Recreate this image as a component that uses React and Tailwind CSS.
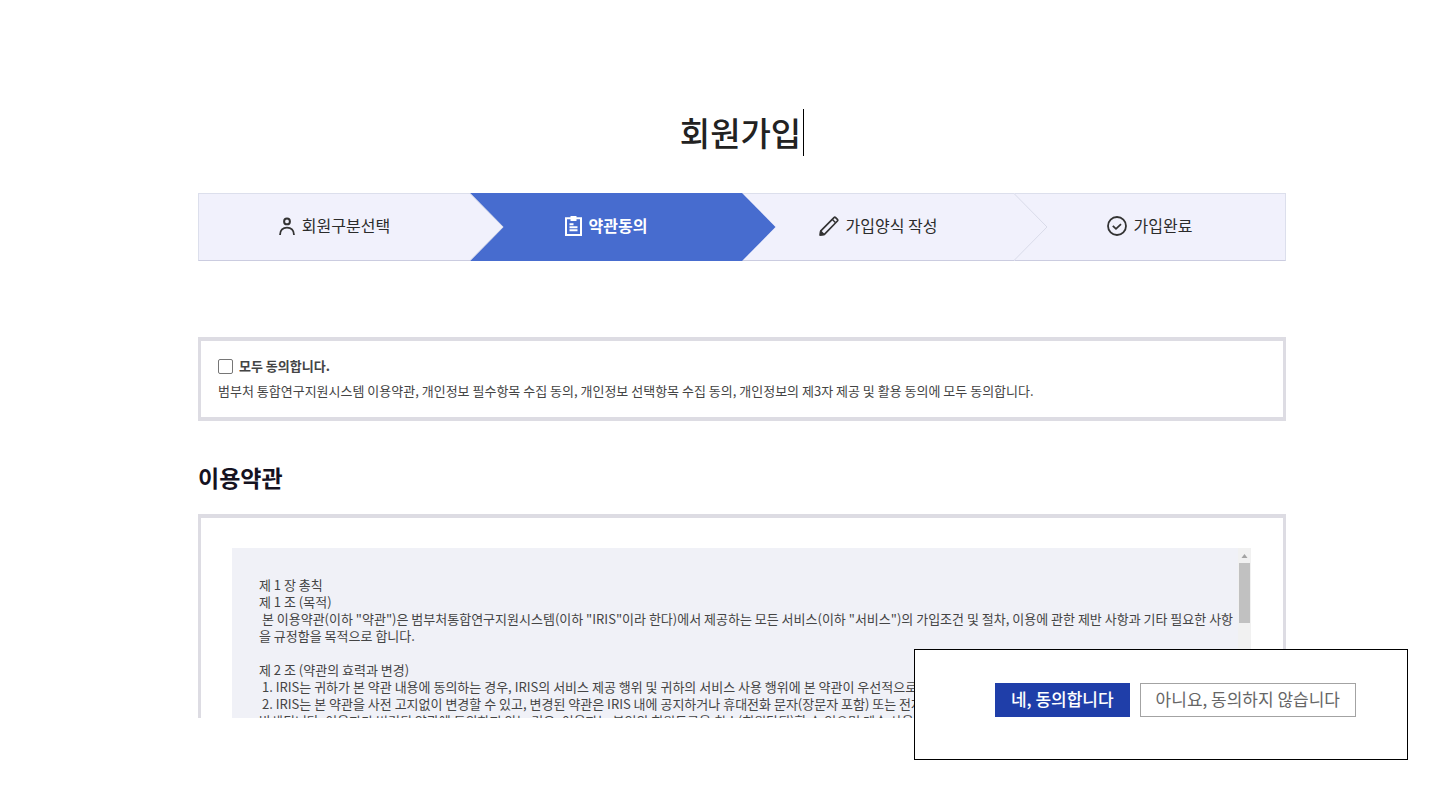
import React from "react";

function UserIcon() {
  return (
    <svg className="h-5 w-4" viewBox="0 0 16 20" fill="none" stroke="#333" strokeWidth="2" aria-hidden="true">
      <circle cx="8" cy="5.4" r="2.9" />
      <path d="M1 19c0-4.8 3-7.4 7-7.4s7 2.6 7 7.4" strokeWidth="1.8" />
    </svg>
  );
}

function ClipboardIcon() {
  return (
    <svg className="h-5 w-[17px]" viewBox="0 0 17 20" fill="none" stroke="#fff" strokeWidth="2" aria-hidden="true">
      <path d="M1 2.2h15V19H1z" />
      <path d="M5.5 0h6v5h-6z" fill="#fff" stroke="none" />
      <path d="M4.5 8.2h4M4.5 11.2h8M4.5 14.2h8" strokeWidth="2" />
    </svg>
  );
}

function PencilIcon() {
  return (
    <svg className="h-5 w-5" viewBox="0 0 20 20" fill="none" stroke="#333" strokeWidth="1.7" strokeLinejoin="round" aria-hidden="true">
      <path d="M1.3 19l.5-4.2L15 1.6c.5-.5 1.1-.5 1.6 0l1.8 1.8c.5.5.5 1.1 0 1.6L5.4 18.3z" />
      <path d="M13.4 3.6l3 3" strokeWidth="1.4" />
      <path d="M1.3 19l.4-3.6 3 3z" fill="#333" />
    </svg>
  );
}

function CheckIcon() {
  return (
    <svg className="h-5 w-5" viewBox="0 0 20 20" fill="none" stroke="#333" strokeWidth="1.8" aria-hidden="true">
      <circle cx="10" cy="10" r="9" />
      <path d="M5.8 9.8l3.2 3 5-4.6" />
    </svg>
  );
}

const steps = [
  { label: "회원구분선택", Icon: UserIcon },
  { label: "약관동의", Icon: ClipboardIcon, active: true },
  { label: "가입양식 작성", Icon: PencilIcon },
  { label: "가입완료", Icon: CheckIcon },
];

function Arrow({ active }) {
  return (
    <svg className="absolute -top-px left-full z-10 h-[68px] w-[34px]" viewBox="0 0 34 68" aria-hidden="true">
      <path d="M0 0L33.5 34L0 68z" fill={active ? "#476ccf" : "#f1f1fc"} />
      {!active && <path d="M0 .5L33 34L0 67.5" fill="none" stroke="#d9dbe9" />}
    </svg>
  );
}

function Steps() {
  return (
    <ol className="mt-[37px] grid grid-cols-4">
      {steps.map(({ label, Icon, active }, i) => (
        <li
          key={label}
          aria-current={active ? "step" : undefined}
          className={
            "relative flex h-[68px] items-center justify-center gap-[7px] border-y pb-0.5 text-base " +
            (active
              ? "border-[#476ccf] bg-[#476ccf] font-bold text-white"
              : "border-t-[#dcdfec] border-b-[#cbcce0] bg-[#f1f1fc] text-[#2b2b2b]") +
            (i === 0 ? " border-l border-l-[#dcdfec]" : "") +
            (i === 3 ? " border-r border-r-[#dcdfec]" : "")
          }
        >
          <Icon />
          <span className="pb-0.5">{label}</span>
          {i < 3 && <Arrow active={active} />}
        </li>
      ))}
    </ol>
  );
}

const terms = `제 1 장 총칙
제 1 조 (목적)
 본 이용약관(이하 "약관")은 범부처통합연구지원시스템(이하 "IRIS"이라 한다)에서 제공하는 모든 서비스(이하 "서비스")의 가입조건 및 절차, 이용에 관한 제반 사항과 기타 필요한 사항
을 규정함을 목적으로 합니다.

제 2 조 (약관의 효력과 변경)
 1. IRIS는 귀하가 본 약관 내용에 동의하는 경우, IRIS의 서비스 제공 행위 및 귀하의 서비스 사용 행위에 본 약관이 우선적으로 적
 2. IRIS는 본 약관을 사전 고지없이 변경할 수 있고, 변경된 약관은 IRIS 내에 공지하거나 휴대전화 문자(장문자 포함) 또는 전자우
발생됩니다. 이용자가 변경된 약관에 동의하지 않는 경우, 이용자는 본인의 회원등록을 취소(회원탈퇴)할 수 있으며 계속 사용의`;

export default function App() {
  return (
    <div className="min-h-screen bg-white font-['Noto_Sans_CJK_KR',sans-serif]">
      <main className="pt-[109px] pr-[154px] pl-[198px]">
        <div className="flex justify-center">
          <h1 className="border-r border-black pr-0.5 text-[33px] leading-[47px] font-medium text-[#222]">회원가입</h1>
        </div>

        <Steps />

        <section className="mt-[76px] border-x-[3px] border-y-4 border-[#dddce3] px-[17px] pt-3 pb-3.5 text-[13px] text-[#444]">
          <label className="flex items-center gap-1.5 leading-[26px] font-bold">
            <input
              type="checkbox"
              className="h-[15px] w-[15px] appearance-none rounded-[2px] border border-[#767676] bg-white"
            />
            모두 동의합니다.
          </label>
          <p className="leading-6">
            범부처 통합연구지원시스템 이용약관, 개인정보 필수항목 수집 동의, 개인정보 선택항목 수집 동의, 개인정보의
            제3자 제공 및 활용 동의에 모두 동의합니다.
          </p>
        </section>

        <section>
          <h2 className="mt-[38px] text-[23px] leading-9 font-bold text-[#15121f]">이용약관</h2>
          <div className="mt-[19px] h-[204px] overflow-hidden border-x-[3px] border-t-4 border-[#dddce3] pt-[30px] pr-8 pl-[31px]">
            <div className="flex bg-[#f0f1f7]">
              <p className="min-w-0 flex-1 overflow-hidden py-7 pl-[27px] text-[13px] leading-[17px] whitespace-pre text-[#444]">
                {terms}
              </p>
              <div className="flex w-[13px] flex-col items-center bg-[#f1f1f1]" aria-hidden="true">
                <svg className="h-[15px] w-[11px]" viewBox="0 0 11 15">
                  <path d="M2.5 10h6l-3-4z" fill="#a3a3a3" />
                </svg>
                <div className="h-[60px] w-[11px] bg-[#c1c1c1]" />
              </div>
            </div>
          </div>
        </section>
      </main>

      <div
        role="dialog"
        aria-label="약관동의"
        className="fixed right-8 bottom-[50px] z-20 flex gap-2.5 border border-black bg-white pt-[33px] pr-[51px] pb-[42px] pl-20 text-[17px] leading-8"
      >
        <button type="button" className="border border-[#1f3ea9] bg-[#1f3ea9] px-[15px] pb-0.5 leading-[30px] font-medium text-white">
          네, 동의합니다
        </button>
        <button type="button" className="border border-[#a3a3a3] bg-white px-[15px] pb-0.5 leading-[30px] text-[#666]">
          아니요, 동의하지 않습니다
        </button>
      </div>
    </div>
  );
}
